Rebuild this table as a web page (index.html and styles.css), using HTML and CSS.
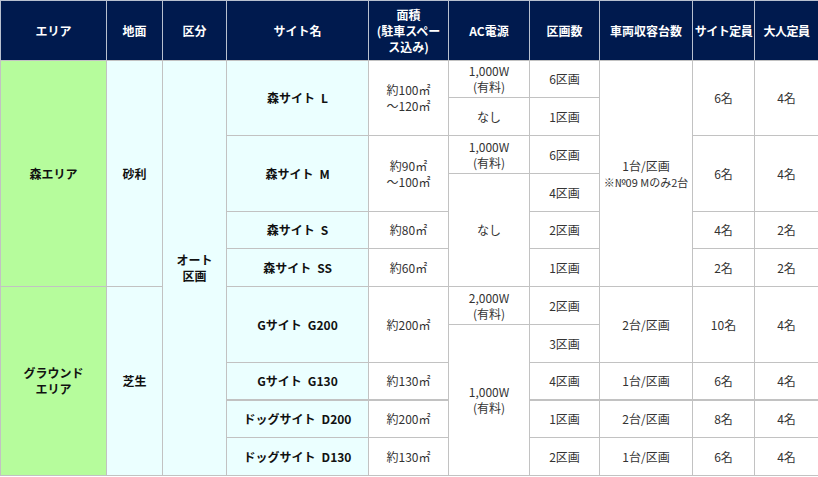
FILE: index.html
```html
<!DOCTYPE html>
<html lang="ja">
<head>
<meta charset="utf-8">
<title>サイト一覧</title>
<link rel="stylesheet" href="styles.css">
</head>
<body>
<table class="sites">
  <colgroup>
    <col class="c-area"><col class="c-ground"><col class="c-kubun"><col class="c-name"><col class="c-size">
    <col class="c-ac"><col class="c-count"><col class="c-car"><col class="c-cap"><col class="c-adult">
  </colgroup>
  <thead>
    <tr class="head">
      <th>エリア</th>
      <th>地面</th>
      <th>区分</th>
      <th>サイト名</th>
      <th>面積<br>(駐車スペー<br>ス込み)</th>
      <th>AC電源</th>
      <th>区画数</th>
      <th>車両収容台数</th>
      <th class="tight">サイト定員</th>
      <th class="tight">大人定員</th>
    </tr>
  </thead>
  <tbody>
    <tr class="r37">
      <td rowspan="6" class="green bold">森エリア</td>
      <td rowspan="6" class="cyan bold">砂利</td>
      <td rowspan="11" class="cyan bold">オート<br>区画</td>
      <td rowspan="2" class="cyan name">森サイト&ensp;L</td>
      <td rowspan="2">約100㎡<br>～120㎡</td>
      <td>1,000W<br>(有料)</td>
      <td>6区画</td>
      <td rowspan="6">1台/区画<br><span class="note">※№09 Mのみ2台</span></td>
      <td rowspan="2">6名</td>
      <td rowspan="2">4名</td>
    </tr>
    <tr class="r38">
      <td>なし</td>
      <td>1区画</td>
    </tr>
    <tr class="r38">
      <td rowspan="2" class="cyan name">森サイト&ensp;M</td>
      <td rowspan="2">約90㎡<br>～100㎡</td>
      <td>1,000W<br>(有料)</td>
      <td>6区画</td>
      <td rowspan="2">6名</td>
      <td rowspan="2">4名</td>
    </tr>
    <tr class="r38">
      <td rowspan="3">なし</td>
      <td>4区画</td>
    </tr>
    <tr class="r37">
      <td class="cyan name">森サイト&ensp;S</td>
      <td>約80㎡</td>
      <td>2区画</td>
      <td>4名</td>
      <td>2名</td>
    </tr>
    <tr class="r38">
      <td class="cyan name">森サイト&ensp;SS</td>
      <td>約60㎡</td>
      <td>1区画</td>
      <td>2名</td>
      <td>2名</td>
    </tr>
    <tr class="r38">
      <td rowspan="5" class="green bold">グラウンド<br>エリア</td>
      <td rowspan="5" class="cyan bold">芝生</td>
      <td rowspan="2" class="cyan name">Gサイト&ensp;G200</td>
      <td rowspan="2">約200㎡</td>
      <td>2,000W<br>(有料)</td>
      <td>2区画</td>
      <td rowspan="2">2台/区画</td>
      <td rowspan="2">10名</td>
      <td rowspan="2">4名</td>
    </tr>
    <tr class="r38">
      <td rowspan="4">1,000W<br>(有料)</td>
      <td>3区画</td>
    </tr>
    <tr class="r37">
      <td class="cyan name">Gサイト&ensp;G130</td>
      <td>約130㎡</td>
      <td>4区画</td>
      <td>1台/区画</td>
      <td>6名</td>
      <td>4名</td>
    </tr>
    <tr class="r38 thick">
      <td class="cyan name">ドッグサイト&ensp;D200</td>
      <td>約200㎡</td>
      <td>1区画</td>
      <td>2台/区画</td>
      <td>8名</td>
      <td>4名</td>
    </tr>
    <tr class="r38">
      <td class="cyan name">ドッグサイト&ensp;D130</td>
      <td>約130㎡</td>
      <td>2区画</td>
      <td>1台/区画</td>
      <td>6名</td>
      <td>4名</td>
    </tr>
  </tbody>
</table>
</body>
</html>
```

FILE: styles.css
```css
html, body {
  margin: 0;
  padding: 0;
  background: #ffffff;
}

.sites {
  width: 818px;
  table-layout: fixed;
  border-collapse: collapse;
  font-family: "Noto Sans CJK JP", "Noto Sans", sans-serif;
  font-size: 12px;
  line-height: 16px;
  color: #333333;
  text-align: center;
}

.c-area { width: 106px; }
.c-ground { width: 56px; }
.c-kubun { width: 64px; }
.c-name { width: 142px; }
.c-size { width: 80px; }
.c-ac { width: 81px; }
.c-count { width: 70px; }
.c-car { width: 93px; }
.c-cap { width: 62px; }
.c-adult { width: 64px; }

.sites th,
.sites td {
  border: 1px solid #c2c2c2;
  padding: 0 2px;
  vertical-align: middle;
}

.head {
  height: 60px;
}

.sites th {
  background: #001a4e;
  color: #ffffff;
  font-weight: bold;
  white-space: nowrap;
  border-color: #b8c0cf;
  border-bottom-color: #c2c2c2;
}

.sites th.tight {
  padding: 0;
  letter-spacing: -0.5px;
}

.r37 { height: 37px; }
.r38 { height: 38px; }

.green {
  background: #b6fc9c;
}

.cyan {
  background: #ebffff;
}

.bold,
.name {
  font-weight: bold;
  color: #111111;
}

.note {
  font-size: 11px;
}

.thick td {
  border-top: 2px solid #c2c2c2;
}
```
